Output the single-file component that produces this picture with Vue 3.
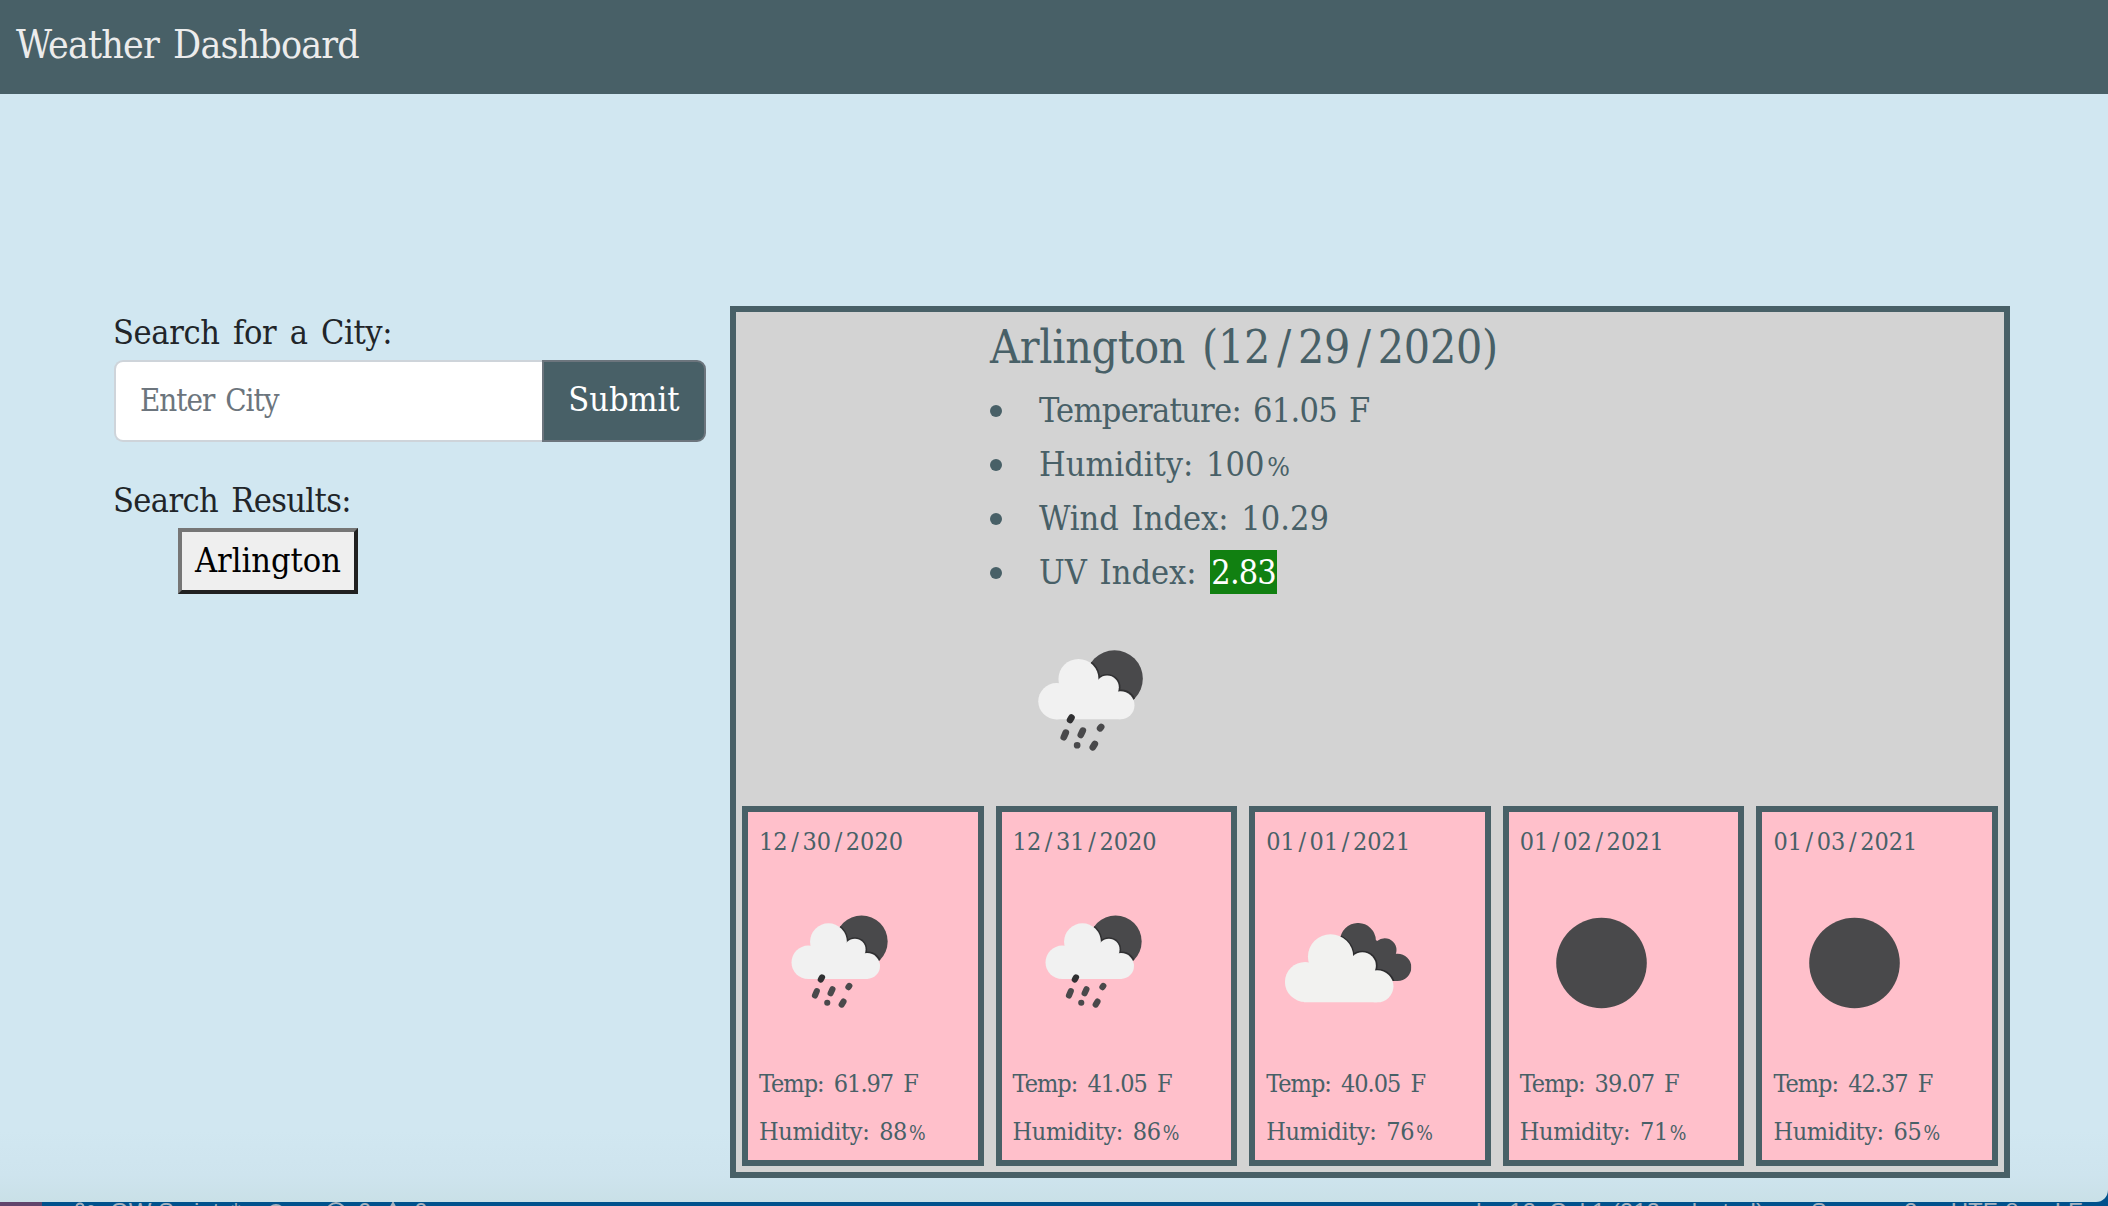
<script setup>
import { h } from 'vue'

const current = {
  city: 'Arlington',
  date: '12/29/2020',
  uv: '2.83',
}

const forecast = [
  { date: '12/30/2020', icon: 'rain', temp: '61.97', humidity: 88 },
  { date: '12/31/2020', icon: 'rain', temp: '41.05', humidity: 86 },
  { date: '01/01/2021', icon: 'clouds', temp: '40.05', humidity: 76 },
  { date: '01/02/2021', icon: 'clear', temp: '39.07', humidity: 71 },
  { date: '01/03/2021', icon: 'clear', temp: '42.37', humidity: 65 },
]

const SpacedDate = (props) => {
  const parts = props.value.split('/')
  return h('span', [
    parts[0],
    h('span', { class: 'slash' }, '/'),
    parts[1],
    h('span', { class: 'slash' }, '/'),
    parts[2],
  ])
}
SpacedDate.props = ['value']
</script>

<template>
  <div class="screen">
    <svg class="defs" width="0" height="0" aria-hidden="true">
      <defs>
        <clipPath id="moon-clip"><circle cx="402" cy="174" r="85" /></clipPath>
        <clipPath id="back-cloud-clip">
          <circle cx="378" cy="452" r="53" />
          <circle cx="457" cy="480" r="35" />
          <circle cx="495" cy="532" r="41" />
          <path d="M340 450H431L490 500L495 573H440Z" />
        </clipPath>
        <symbol id="rain" viewBox="0 0 160 160">
          <g transform="translate(-21.7 5.1) scale(.3067)">
            <circle cx="402" cy="174" r="85" fill="#49494b" />
            <g fill="#303032" clip-path="url(#moon-clip)">
              <circle cx="294" cy="175" r="65" />
              <circle cx="380" cy="200" r="40" />
              <circle cx="422" cy="253" r="46" />
            </g>
            <g fill="#f1f1f1">
              <circle cx="228" cy="242" r="54.500" />
              <circle cx="294" cy="175" r="60" />
              <circle cx="380" cy="200" r="35" />
              <circle cx="420" cy="254" r="42" />
              <path d="M228 296V200L294 160L380 190L420 240V296Z" />
            </g>
            <g stroke="#49494b" stroke-width="20" stroke-linecap="round">
              <path d="M273 291L269 298" stroke="#303032" />
              <path d="M256 336L250 350M307 330L301 343M362 319L359 323M290 374h.1M343 370L337 380" />
            </g>
          </g>
        </symbol>
        <symbol id="clouds" viewBox="0 0 160 160">
          <g transform="translate(-36.8 -93) scale(.338 .3333)">
            <g clip-path="url(#back-cloud-clip)">
              <rect x="310" y="390" width="240" height="200" fill="#49494b" />
              <g fill="#2c2c2e">
                <circle cx="297" cy="500" r="71" />
                <circle cx="391" cy="527" r="45" />
                <circle cx="437" cy="588" r="51" />
              </g>
            </g>
            <g fill="#f2f2f0">
              <circle cx="222" cy="576" r="60" />
              <circle cx="297" cy="500" r="67" />
              <circle cx="391" cy="527" r="40" />
              <circle cx="435" cy="589" r="48" />
              <path d="M218 637V530L297 480L391 510L435 560V637Z" />
            </g>
          </g>
        </symbol>
        <symbol id="clear" viewBox="0 0 160 160">
          <circle cx="80.500" cy="80" r="45.300" fill="#49494b" />
        </symbol>
      </defs>
    </svg>

    <div class="window">
      <header class="navbar">Weather Dashboard</header>

      <main class="content">
        <section class="search">
          <label class="label" for="city">Search for a City:</label>
          <div class="input-group">
            <input id="city" type="text" placeholder="Enter City" />
            <button class="submit" type="button">Submit</button>
          </div>
          <div class="label results">Search Results:</div>
          <button class="history" type="button">Arlington</button>
        </section>

        <section class="panel">
          <div class="today">
            <h1>{{ current.city }} (<SpacedDate :value="current.date" />)</h1>
            <ul>
              <li class="temperature">Temperature: 61.05 F</li>
              <li>Humidity: 100<span class="pct">%</span></li>
              <li>Wind Index: 10.29</li>
              <li>UV Index: <span class="uv">{{ current.uv }}</span></li>
            </ul>
            <svg class="today-icon"><use href="#rain" /></svg>
          </div>
          <div class="forecast">
            <article v-for="day in forecast" :key="day.date" class="day">
              <div class="date"><SpacedDate :value="day.date" /></div>
              <svg class="day-icon"><use :href="'#' + day.icon" /></svg>
              <div class="line temp">Temp: {{ day.temp }} F</div>
              <div class="line">Humidity: {{ day.humidity }}<span class="pct">%</span></div>
            </article>
          </div>
        </section>
      </main>
    </div>

    <footer class="status">
      <div class="remote"></div>
      <svg class="branch" viewBox="0 0 20 20">
        <circle cx="5" cy="5" r="3.500" /><circle cx="16" cy="7.500" r="3.500" />
        <path d="M5 9v8M16 11q0 4-11 4" />
      </svg>
      <span class="repo">GW Scripts*</span>
      <svg class="sync" viewBox="0 0 20 20"><circle cx="10" cy="10" r="8" /></svg>
      <svg class="error" viewBox="0 0 20 20"><circle cx="10" cy="10" r="9" /></svg>
      <span>0</span>
      <svg class="warn" viewBox="0 0 20 20"><path d="M10 1L19 18H1Z" /></svg>
      <span>0</span>
      <span class="cursor">Ln 12, Col 1 (212 selected)</span>
      <span class="spaces">Spaces: 2</span>
      <span class="encoding">UTF-8</span>
      <span class="eol">LF</span>
    </footer>
  </div>
</template>

<style>
body {
  overflow: hidden;
}
</style>

<style scoped>
.screen {
  width: 2108px;
  height: 1206px;
  overflow: hidden;
  background: #00518c;
  font-family: "DejaVu Serif Condensed", "DejaVu Serif", serif;
  font-stretch: condensed;
  color: #212529;
  display: flex;
  flex-direction: column;
}
.screen * {
  box-sizing: border-box;
}
.defs {
  position: absolute;
}
.window {
  height: 1202px;
  flex: none;
  overflow: hidden;
  border-bottom-right-radius: 12px;
  background: linear-gradient(#d1e7f1 0 1130px, #cee4ee 1175px, #c9e0e7 1202px);
}
.navbar {
  height: 94px;
  padding-left: 16px;
  background: #486067;
  color: #ececec;
  font-size: 39px;
  line-height: 89px;
  letter-spacing: -0.85px;
  word-spacing: 4px;
}
.content {
  display: flex;
  padding: 212px 98px 0 114px;
  justify-content: space-between;
}
.search {
  width: 592px;
}
.label {
  display: block;
  margin-left: -1px;
  font-size: 34px;
  line-height: 52px;
  letter-spacing: -0.35px;
  word-spacing: 4px;
}
.input-group {
  display: flex;
  height: 82px;
  margin-top: 2px;
}
input {
  flex: 1;
  min-width: 0;
  margin: 0;
  padding: 0 0 3px 24px;
  border: 2px solid #ced4da;
  border-right: 0;
  border-radius: 9px 0 0 9px;
  background: #fff;
  font: inherit;
  font-size: 31px;
  letter-spacing: -1px;
  word-spacing: 3px;
}
input::placeholder {
  color: #6c757d;
  opacity: 1;
}
.submit {
  width: 164px;
  padding: 0 0 4px;
  border: 2px solid #6c757d;
  border-radius: 0 9px 9px 0;
  background: #486067;
  color: #fff;
  font: inherit;
  font-size: 34px;
}
.results {
  margin-top: 32px;
  letter-spacing: -0.6px;
}
.history {
  display: block;
  width: 180px;
  height: 66px;
  margin: 2px 0 0 64px;
  padding: 0 0 3px;
  border: 4px solid;
  border-color: #767676 #212121 #212121 #767676;
  background: #efefef;
  color: #000;
  font: inherit;
  font-size: 34px;
}
.panel {
  width: 1280px;
  height: 872px;
  padding: 8px 0 6px;
  border: 6px solid #486067;
  background: #d3d3d3;
  color: #486067;
  display: flex;
  flex-direction: column;
}
.today {
  padding-left: 254px;
}
h1 {
  margin: 0 0 8px;
  font-size: 46px;
  line-height: 55px;
  font-weight: 400;
  letter-spacing: -0.25px;
  word-spacing: 4px;
}
h1 :deep(.slash) {
  margin: 0 7px;
}
ul {
  margin: 0;
  padding: 0;
  list-style: none;
  font-size: 34px;
  line-height: 54px;
  word-spacing: 3px;
}
li {
  display: flex;
  align-items: center;
  white-space: pre;
}
li::before {
  content: "";
  width: 12px;
  height: 12px;
  margin: 2px 37px 0 0;
  border-radius: 50%;
  background: #486067;
}
.temperature {
  letter-spacing: -0.7px;
}
.pct {
  font-size: 0.78em;
  margin-left: 0.1em;
}
li .pct {
  position: relative;
  top: 3px;
}
.uv {
  height: 44px;
  padding: 0 1px;
  margin-left: 1px;
  background: #118011;
  color: #fff;
  line-height: 44px;
  letter-spacing: -0.9px;
}
.today-icon {
  display: block;
  width: 174px;
  height: 174px;
  margin: 16px 0 0 14px;
}
.forecast {
  display: grid;
  grid-template-columns: repeat(5, 1fr);
  gap: 12px;
  height: 360px;
  margin-top: auto;
  padding: 0 6px;
}
.day {
  border: 6px solid #486067;
  background: #ffc0cb;
  padding: 6px 0 0 11px;
  font-size: 25px;
}
.date {
  line-height: 48px;
  white-space: nowrap;
}
.date :deep(.slash) {
  margin: 0 3.6px;
}
.day-icon {
  display: block;
  width: 160px;
  height: 160px;
  margin: 17px 0 17px 1px;
}
.line {
  line-height: 48px;
  letter-spacing: -0.35px;
  word-spacing: 3px;
}
.temp {
  letter-spacing: -1px;
  word-spacing: 4px;
}
.status {
  height: 4px;
  flex: none;
  overflow: hidden;
  display: flex;
  align-items: flex-start;
  color: #a9b4bf;
  font-family: "Liberation Sans", Arial, sans-serif;
  font-size: 24px;
  line-height: 28px;
  white-space: nowrap;
}
.status span {
  margin-top: -4px;
}
.status svg {
  flex: none;
  width: 20px;
  height: 20px;
  fill: none;
  stroke: #a9b4bf;
  stroke-width: 2;
}
.remote {
  flex: none;
  width: 42px;
  height: 4px;
  background: #60456c;
}
.branch {
  margin-left: 33px;
}
.repo {
  width: 142px;
  margin-left: 15px;
}
.status .sync {
  margin: 1px 0 0 14px;
}
.status .error {
  margin: 0 12px 0 40px;
}
.status .warn {
  margin: 0 11px 0 12px;
}
.cursor {
  width: 300px;
  margin-left: 1048px;
}
.spaces {
  width: 140px;
  margin-left: 35px;
}
.encoding {
  width: 104px;
}
</style>
